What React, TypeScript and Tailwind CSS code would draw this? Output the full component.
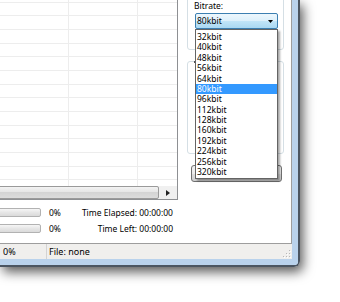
const rates = [
  "32kbit",
  "40kbit",
  "48kbit",
  "56kbit",
  "64kbit",
  "80kbit",
  "96kbit",
  "112kbit",
  "128kbit",
  "160kbit",
  "192kbit",
  "224kbit",
  "256kbit",
  "320kbit",
];

function ProgressRow({ label }: { label: string }) {
  return (
    <div className="flex h-[9px] items-center">
      <div className="ml-[-10px] h-[9px] w-[51px] shrink-0 rounded-[2px] border border-[#b2b2b2] bg-[linear-gradient(#f6f6f6,#e6e6e6_50%,#dadada)]" />
      <span className="ml-[8px] leading-[9px]">0%</span>
      <span className="flex-1 pr-[5px] text-right leading-[9px]">{label}</span>
    </div>
  );
}

export default function App() {
  return (
    <div className="relative h-[302px] w-[340px] overflow-hidden bg-white font-['Noto_Sans',sans-serif] text-[8.5px] text-black">
      {/* window frame */}
      <div className="w-[300px] rounded-br-[6px] border-r-2 border-b-2 border-[#4b5561] shadow-[3px_5px_12px_rgba(0,0,0,0.65)]">
        <div className="rounded-br-[4px] border-r-[6px] border-b-[6px] border-[#b9d2ec]">
          <div className="flex h-[244px] border-r border-b border-[#9d9d9d] bg-white">
            {/* left column */}
            <div className="w-[178px] shrink-0">
              <div className="flex h-[200px] flex-col overflow-hidden border-r border-b border-[#8e9093]">
                <div className="flex-1 overflow-hidden">
                  <div className="-mt-[11px]">
                    {Array.from({ length: 15 }).map((_, i) => (
                      <div key={i} className="flex h-[13.66px] border-b border-[#ededed]">
                        <div className="w-[69px] border-r border-[#ededed]" />
                        <div className="w-[69px] border-r border-[#ededed]" />
                        <div className="flex-1" />
                      </div>
                    ))}
                  </div>
                </div>
                <div className="flex h-[13px] bg-[#ececec]">
                  <div className="ml-[-4px] flex-1 rounded-[2px] border border-[#9a9a9a] bg-[linear-gradient(#f3f3f3,#e4e4e4_50%,#d4d4d4_50%,#dcdcdc)]" />
                  <div className="flex w-[18px] items-center justify-center bg-[#f0f0f0]">
                    <svg width="4" height="6" viewBox="0 0 4 6">
                      <polygon points="0,0 4,3 0,6" fill="#222" />
                    </svg>
                  </div>
                </div>
              </div>
              <div className="flex flex-col gap-[7px] pt-[8px]">
                <ProgressRow label="Time Elapsed: 00:00:00" />
                <ProgressRow label="Time Left: 00:00:00" />
              </div>
            </div>

            {/* right panel */}
            <div className="flex-1">
              <div className="-mt-[10px] ml-[9px] h-[60px] w-[97px] rounded-[3px] border border-[#d5dfe5] pt-[9px] pl-[7px]">
                <div className="-ml-[1px] h-[12px] leading-[12px]">Bitrate:</div>
                <div className="mt-[1px] flex h-[16px] w-[83px] items-center justify-between rounded-[2px] border border-[#3c7fb1] bg-[linear-gradient(#edf7fd,#dcf0fb_50%,#c2e5f8_50%,#a9d8f2)] pr-[4px] pl-[1px]">
                  <span className="leading-[14px]">80kbit</span>
                  <svg width="5" height="3" viewBox="0 0 5 3">
                    <polygon points="0,0 5,0 2.5,3" fill="#000" />
                  </svg>
                </div>
              </div>
              <div className="mt-[11px] ml-[9px] h-[93px] w-[97px] rounded-[3px] border border-[#d5dfe5]">
                <div className="-mt-[1px] ml-[6px] h-[2px] w-[1px] bg-[#555]" />
              </div>
              <div className="mt-[11px] ml-[13px] h-[17px] w-[91px] rounded-[3px] border border-[#707070] bg-[linear-gradient(#f2f2f2,#ebebeb_50%,#dddddd_50%,#cfcfcf)]" />
            </div>
          </div>

          {/* status bar */}
          <div className="flex h-[15px] items-center bg-[#f0efed] text-[9px]">
            <div className="w-[46px] pl-[3px] leading-[15px]">0%</div>
            <div className="h-full border-l border-[#d3d3d3] pl-[2px] leading-[15px]">File: none</div>
            <svg className="mt-auto mr-[1px] mb-[1px] ml-auto" width="8" height="8" viewBox="0 0 8 8">
              <rect x="6" y="0" width="1" height="1" fill="#b8b8b8" />
              <rect x="3" y="3" width="1" height="1" fill="#b8b8b8" />
              <rect x="6" y="3" width="1" height="1" fill="#b8b8b8" />
              <rect x="0" y="6" width="1" height="1" fill="#b8b8b8" />
              <rect x="3" y="6" width="1" height="1" fill="#b8b8b8" />
              <rect x="6" y="6" width="1" height="1" fill="#b8b8b8" />
              <rect x="7" y="1" width="1" height="1" fill="#fff" />
              <rect x="4" y="4" width="1" height="1" fill="#fff" />
              <rect x="7" y="4" width="1" height="1" fill="#fff" />
              <rect x="1" y="7" width="1" height="1" fill="#fff" />
              <rect x="4" y="7" width="1" height="1" fill="#fff" />
              <rect x="7" y="7" width="1" height="1" fill="#fff" />
            </svg>
          </div>
        </div>
      </div>

      {/* open bitrate list */}
      <div className="absolute top-[29px] left-[195px] h-[150px] w-[83px] border border-[#646464] bg-white pt-[2px] shadow-[2px_2px_2px_rgba(0,0,0,0.35)]">
        {rates.map((r) => (
          <div
            key={r}
            className={
              r === "80kbit"
                ? "h-[10.38px] bg-[#3399ff] pl-[1px] leading-[10.38px] text-white"
                : "h-[10.38px] pl-[1px] leading-[10.38px]"
            }
          >
            {r}
          </div>
        ))}
      </div>
    </div>
  );
}
